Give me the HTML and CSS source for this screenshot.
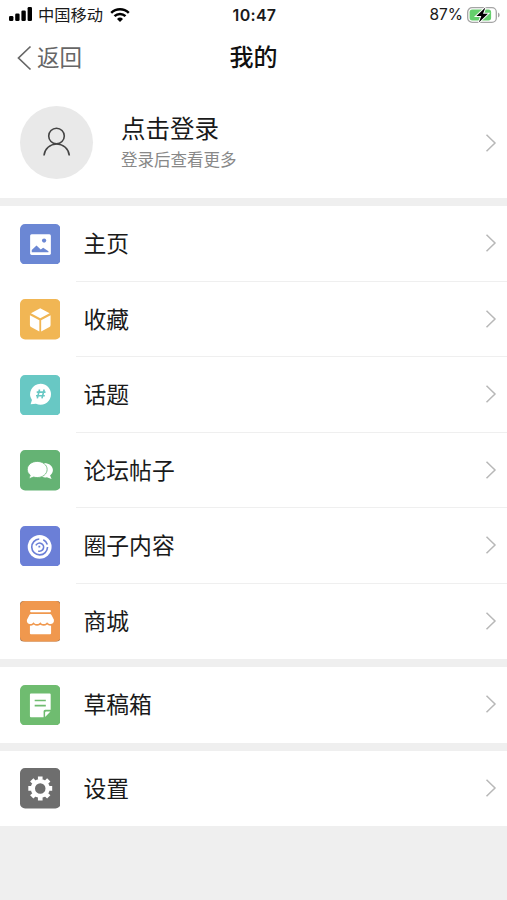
FILE: index.html
```html
<!DOCTYPE html>
<html lang="zh-CN">
<head>
    <meta charset="UTF-8">
    <meta name="viewport" content="width=device-width, initial-scale=1.0">
    <title>我的</title>
    <link rel="stylesheet" href="styles.css">
</head>
<body>
	<div class="statusBar">
		<div class="carrier">
			<svg class="signal" width="24" height="14" viewBox="0 0 24 14">
				<rect x="0" y="9" width="4.4" height="5" rx="1.3"/>
				<rect x="6.2" y="6.5" width="4.4" height="7.5" rx="1.3"/>
				<rect x="12.4" y="3.5" width="4.4" height="10.5" rx="1.3"/>
				<rect x="18.6" y="0" width="4.4" height="14" rx="1.3"/>
			</svg>
			<span>中国移动</span>
			<svg class="wifi" width="20" height="14" viewBox="0 0 20 14">
				<path d="M1.2 4.8a12.8 12.8 0 0 1 17.6 0M4.5 8.2a8 8 0 0 1 11 0" fill="none" stroke="#000" stroke-width="2.5"/>
				<path d="M10 14l-3-3.1a4.3 4.3 0 0 1 6 0z"/>
			</svg>
		</div>
		<div class="time">10:47</div>
		<div class="power">
			<span>87%</span>
			<svg width="33" height="18" viewBox="0 0 33 18">
				<rect x="0.7" y="1.7" width="28.6" height="14.6" rx="4.4" fill="#fff" stroke="#a5a5a5" stroke-width="1.3"/>
				<rect x="2.6" y="3.6" width="21.5" height="10.8" rx="2.6" fill="#64cf6c"/>
				<path d="M31 6.6q1.7.7 1.7 2.4T31 11.4z" fill="#a5a5a5"/>
				<path d="M18.4 1.4l-9 8.7h4.9l-2.5 6.5 9.1-8.9H16z" stroke="#fff" stroke-width="2" paint-order="stroke"/>
			</svg>
		</div>
	</div>
	<div class="navBar">
		<div class="back">
			<svg width="15" height="26" viewBox="0 0 15 26"><path d="M13.5 1.500L1.500 13l12 11.500"/></svg>
			<span>返回</span>
		</div>
		<h1>我的</h1>
	</div>
	<div class="profile">
		<div class="avatar">
			<svg width="30" height="32" viewBox="0 0 30 32"><circle cx="14.500" cy="9" r="7.800"/><path d="M2 28.500a12.700 12.700 0 0 1 25.300 0"/></svg>
		</div>
		<div class="login">
			<h2>点击登录</h2>
			<p>登录后查看更多</p>
		</div>
		<svg class="arrow" width="12" height="20" viewBox="0 0 12 20"><path d="M1.5 1.7L10 10l-8.5 8.3"/></svg>
	</div>
	<div class="menu">
		<div class="item">
			<svg class="icon" viewBox="0 0 40 40">
				<rect class="blue" width="40" height="40" rx="5"/>
				<rect x="10" y="10" width="20.5" height="20.5" rx="1.5"/>
				<circle class="blue" cx="23.8" cy="16.3" r="2.1"/>
				<path class="blue" d="M11.6 28v-2.2l4.7-4.5 4.2 3.8 2.4-1.7 5.2 3.4V28z"/>
			</svg>
			<div class="label"><span>主页</span><svg class="arrow" width="12" height="20" viewBox="0 0 12 20"><path d="M1.5 1.7L10 10l-8.5 8.3"/></svg></div>
		</div>
		<div class="item">
			<svg class="icon" viewBox="0 0 40 40">
				<rect class="yellow" width="40" height="40" rx="5"/>
				<path d="M20 9.2l9.2 4.9-9.2 4.8-9.2-4.8zM9.8 16l9.3 5v11.1l-8.2-4.4q-1.1-.6-1.1-1.9zM30.2 16l-9.3 5v11.1l8.2-4.4q1.1-.6 1.1-1.9z"/>
			</svg>
			<div class="label"><span>收藏</span><svg class="arrow" width="12" height="20" viewBox="0 0 12 20"><path d="M1.5 1.7L10 10l-8.5 8.3"/></svg></div>
		</div>
		<div class="item">
			<svg class="icon" viewBox="0 0 40 40">
				<rect class="teal" width="40" height="40" rx="5"/>
				<path d="M20.3 8.6a10.4 10.4 0 1 1-4.5 19.8l-5.3.4 1.3-4A10.4 10.4 0 0 1 20.3 8.6z"/>
				<path class="tealLine" d="M19.300 14.300l-2.200 8.800M23.900 14.300l-2.200 8.800M16.500 16.900h8.700M15.800 20.500h8.700"/>
			</svg>
			<div class="label"><span>话题</span><svg class="arrow" width="12" height="20" viewBox="0 0 12 20"><path d="M1.5 1.7L10 10l-8.5 8.3"/></svg></div>
		</div>
		<div class="item">
			<svg class="icon" viewBox="0 0 40 40">
				<rect class="green" width="40" height="40" rx="5"/>
				<path d="M24 12.8c5 .2 8.5 3.3 8.5 7 0 2.2-1 4-2.8 5.4l1.5 3.5-4.7-1.8c-2.1.4-4.4.1-6.1-.9z"/>
				<path class="greenEdge" d="M17 11.300c5.300 0 9.800 3.300 9.800 7.900S22.300 27.200 17 27.200c-1.300 0-2.500-.2-3.600-.5L8.800 28.500l1.300-3.700c-1.800-1.400-2.900-3.400-2.900-5.600 0-4.600 4.500-7.900 9.800-7.900z"/>
			</svg>
			<div class="label"><span>论坛帖子</span><svg class="arrow" width="12" height="20" viewBox="0 0 12 20"><path d="M1.5 1.7L10 10l-8.5 8.3"/></svg></div>
		</div>
		<div class="item">
			<svg class="icon" viewBox="0 0 40 40">
				<rect class="indigo" width="40" height="40" rx="5"/>
				<circle cx="19.4" cy="20.6" r="11.8"/>
				<path class="indigoLine" d="M19 12.900a7.800 7.800 0 1 0 8.200 7.900M23 13.600q3 1.500 4 4.600M18 24.700a4 4 0 1 0-2.300-5.500M18.200 20.400h1.800"/>
			</svg>
			<div class="label"><span>圈子内容</span><svg class="arrow" width="12" height="20" viewBox="0 0 12 20"><path d="M1.5 1.7L10 10l-8.5 8.3"/></svg></div>
		</div>
		<div class="item">
			<svg class="icon" viewBox="0 0 40 40">
				<rect class="corner" width="40" height="40" rx="3.500"/>
				<rect class="orange" width="40" height="40" rx="5"/>
				<rect x="10" y="8.800" width="20.500" height="2.400" rx="1"/>
				<path d="M10.800 12.800h18.800q1 0 1.500 1l2.400 4.700c.4 3-1.600 4.300-3.400 4.200-1.600 0-2.700-.8-3.300-1.800-.8 1.200-2 1.900-3.400 1.900s-2.600-.7-3.300-1.900c-.8 1.200-2 1.900-3.400 1.900s-2.600-.7-3.300-1.900c-.7 1.100-1.700 1.800-3.100 1.800-2.200 0-4-1.500-3.400-4.200l2.400-4.700q.5-1 1.500-1z"/>
				<path d="M9.800 24.500q2.200 0 3.800-1.300 3 2.600 6.500.2 3.600 2.400 6.700-.2 1.600 1.200 3.900 1.300v7.400q0 1-1 1H10.800q-1 0-1-1z"/>
			</svg>
			<div class="label"><span>商城</span><svg class="arrow" width="12" height="20" viewBox="0 0 12 20"><path d="M1.5 1.7L10 10l-8.5 8.3"/></svg></div>
		</div>
	</div>
	<div class="menu">
		<div class="item">
			<svg class="icon" viewBox="0 0 40 40">
				<rect class="leaf" width="40" height="40" rx="5"/>
				<path d="M10.800 8.500h18.500q1 0 1 1v15h-5.500q-1.500 0-1.500 1.500v5.800H10.800q-1 0-1-1V9.500q0-1 1-1zM24.800 31.500v-4.300q0-1.100 1.100-1.100h4.200z"/>
				<path class="leafLine" d="M14.500 15.300h11M14.500 20.400h11"/>
			</svg>
			<div class="label"><span>草稿箱</span><svg class="arrow" width="12" height="20" viewBox="0 0 12 20"><path d="M1.5 1.7L10 10l-8.5 8.3"/></svg></div>
		</div>
	</div>
	<div class="menu">
		<div class="item">
			<svg class="icon" viewBox="0 0 40 40">
				<rect class="gray" width="40" height="40" rx="5"/>
				<g transform="translate(20 20.200)">
					<circle r="7.300" fill="none" stroke="#fff" stroke-width="4.200"/>
					<path class="teeth" d="M0-8.500V-11.800M0 8.500V11.800M-8.500 0H-11.800M8.500 0H11.800M-6-6L-8.400-8.400M6 6L8.400 8.400M-6 6L-8.400 8.400M6-6L8.400-8.400"/>
				</g>
			</svg>
			<div class="label"><span>设置</span><svg class="arrow" width="12" height="20" viewBox="0 0 12 20"><path d="M1.5 1.7L10 10l-8.5 8.3"/></svg></div>
		</div>
	</div>
</body>
</html>
```
FILE: styles.css
```css
body,html{
	margin: 0;
	padding: 0;
}
body{
	min-height: 100vh;
	background: #efefef;
	color: #1a1a1a;
	font-family: Inter, "Noto Sans CJK SC", sans-serif;
}
h1,h2,p{
	margin: 0;
	font-weight: 400;
}
svg{
	display: block;
	flex-shrink: 0;
}
.statusBar{
	display: grid;
	grid-template-columns: 1fr auto 1fr;
	align-items: center;
	height: 29px;
	padding: 0 7px 0 9px;
	background: #fff;
	font-size: 16px;
	line-height: 29px;
}
.carrier,.power{
	display: flex;
	align-items: center;
}
.carrier{
	font-size: 16.300px;
}
.carrier span{
	padding-top: 2px;
	line-height: 27px;
}
.signal{
	margin: 0 5px 1px 0;
}
.wifi{
	margin-left: 7px;
}
.time{
	font-weight: 600;
	font-size: 16px;
	letter-spacing: 0.3px;
	padding-top: 1px;
	line-height: 28px;
}
.power{
	justify-content: flex-end;
	gap: 4px;
}
.power span{
	padding-top: 1px;
	line-height: 28px;
	font-size: 15.500px;
}
.navBar{
	display: grid;
	grid-template-columns: 1fr auto 1fr;
	align-items: center;
	height: 58px;
	padding: 0 17px;
	box-sizing: border-box;
	background: #fff;
}
.back{
	display: flex;
	align-items: center;
	gap: 5px;
	color: #666;
	font-size: 22.500px;
	line-height: 56px;
}
.back path{
	fill: none;
	stroke: #666;
	stroke-width: 1.700;
}
.navBar h1{
	font-size: 24px;
	font-weight: 500;
	line-height: 56px;
	color: #111;
}
.profile{
	display: flex;
	align-items: center;
	height: 111px;
	padding: 0 10px 0 20px;
	background: #fff;
}
.avatar{
	display: flex;
	align-items: center;
	justify-content: center;
	width: 73px;
	height: 73px;
	border-radius: 50%;
	background: #e9e9e9;
}
.avatar svg{
	fill: none;
	stroke: #444;
	stroke-width: 1.600;
}
.login{
	flex-grow: 1;
	margin-left: 28px;
}
.login h2{
	font-size: 24.500px;
	line-height: 34px;
}
.login p{
	padding-top: 1px;
	font-size: 16.500px;
	line-height: 27px;
	color: #888;
}
.arrow{
	fill: none;
	stroke: #b8b8b8;
	stroke-width: 1.500;
}
.menu{
	margin-top: 8px;
	background: #fff;
}
.item{
	display: flex;
	align-items: center;
	height: 75.500px;
	padding-left: 19.700px;
}
.icon{
	width: 40.500px;
	height: 40.500px;
	fill: #fff;
}
.label{
	display: flex;
	flex-grow: 1;
	align-items: center;
	justify-content: space-between;
	height: 100%;
	margin-left: 15.800px;
	padding: 0 10px 0 7.500px;
	box-sizing: border-box;
	border-bottom: 1.500px solid #efefef;
	font-size: 22.800px;
}
.label span{
	padding-bottom: 1px;
}
.item:last-child .label{
	border-bottom-color: transparent;
}
.blue{fill: #6b87d4;}
.yellow{fill: #f1b654;}
.teal{fill: #68c8c4;}
.green{fill: #65b374;}
.indigo{fill: #6b7fd7;}
.corner{fill: #a97850;}
.orange{fill: #f0984e;}
.leaf{fill: #6fbc70;}
.gray{fill: #6e6e6e;}
.tealLine,.indigoLine,.leafLine{
	fill: none;
	stroke-width: 1.600;
}
.tealLine{stroke: #68c8c4;}
.indigoLine{stroke: #6b7fd7;}
.leafLine{stroke: #6fbc70;}
.greenEdge{
	stroke: #65b374;
	stroke-width: 0.800;
}
.teeth{
	stroke: #fff;
	stroke-width: 4.600;
}
```
